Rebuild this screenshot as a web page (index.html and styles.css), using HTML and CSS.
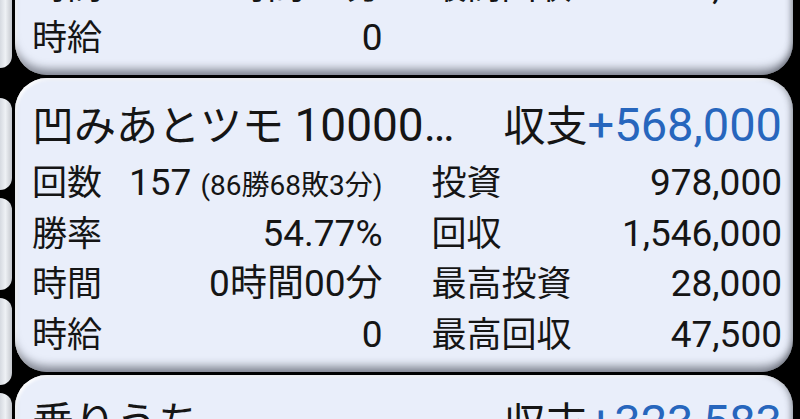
FILE: index.html
```html
<!DOCTYPE html>
<html lang="ja">
<head>
<meta charset="utf-8">
<link rel="stylesheet" href="styles.css">
</head>
<body>
<div class="screen">
  <div class="side">
    <div class="pill p1"></div>
    <div class="pill p2"></div>
    <div class="pill p3"></div>
    <div class="pill p4"></div>
    <div class="pill p5"></div>
  </div>
  <div class="list">
    <div class="card first">
      <div class="title"><span class="name">ジャグラー</span><span class="bal"><span class="bal-label">収支</span><span class="plus">+50,000</span></span></div>
      <div class="row"><div class="cell"><span>回数</span><span class="v">10</span></div><div class="cell"><span>投資</span><span class="v">10,000</span></div></div>
      <div class="row"><div class="cell"><span>勝率</span><span class="v">50.00%</span></div><div class="cell"><span>回収</span><span class="v">60,000</span></div></div>
      <div class="row"><div class="cell"><span>時間</span><span class="v">0時間00分</span></div><div class="cell"><span>最高回収</span><span class="v">60,000</span></div></div>
      <div class="row"><div class="cell"><span>時給</span><span class="v">0</span></div><div class="cell"><span></span><span></span></div></div>
    </div>
    <div class="card">
      <div class="title"><span class="name">凹みあとツモ <span class="lat">10000…</span></span><span class="bal"><span class="bal-label">収支</span><span class="plus">+568,000</span></span></div>
      <div class="row"><div class="cell"><span>回数</span><span class="v">157 <small>(86勝68敗3分)</small></span></div><div class="cell"><span>投資</span><span class="v">978,000</span></div></div>
      <div class="row"><div class="cell"><span>勝率</span><span class="v">54.77%</span></div><div class="cell"><span>回収</span><span class="v">1,546,000</span></div></div>
      <div class="row"><div class="cell"><span>時間</span><span class="v">0時間00分</span></div><div class="cell"><span>最高投資</span><span class="v">28,000</span></div></div>
      <div class="row"><div class="cell"><span>時給</span><span class="v">0</span></div><div class="cell"><span>最高回収</span><span class="v">47,500</span></div></div>
    </div>
    <div class="card">
      <div class="title"><span class="name">乗りうち</span><span class="bal"><span class="bal-label">収支</span><span class="plus">+323,583</span></span></div>
      <div class="row"><div class="cell"><span>回数</span><span class="v">100</span></div><div class="cell"><span>投資</span><span class="v">500,000</span></div></div>
    </div>
  </div>
</div>
</body>
</html>
```
FILE: styles.css
```css
html, body {
  margin: 0;
  padding: 0;
  background: #000;
}
body {
  width: 800px;
  height: 419px;
  overflow: hidden;
  font-family: Roboto, "Noto Sans CJK JP", sans-serif;
  color: #151515;
}
.screen {
  display: flex;
  align-items: flex-start;
  height: 419px;
  overflow: hidden;
}
.side {
  width: 12px;
  flex: none;
  display: flex;
  flex-direction: column;
  gap: 8px;
  margin-top: -20px;
  margin-right: 3px;
}
.pill {
  height: 92px;
  border-radius: 0 40px 40px 0;
  background: linear-gradient(90deg, #d6dae1 0%, #eef1f5 45%, #c4c7cd 100%);
}
.p1 { height: 88px; margin-bottom: 22px; }
.p4 { height: 87px; }
.list {
  width: 778px;
  flex: none;
  display: flex;
  flex-direction: column;
  gap: 3px;
}
.card {
  height: 294px;
  box-sizing: border-box;
  background: #e9eefa;
  border-radius: 32px;
  padding: 20px 11px 12px 17px;
  box-shadow:
    inset 0 -10px 8px -4px rgba(40, 44, 56, 0.5),
    inset -5px 0 6px -3px rgba(40, 44, 56, 0.4),
    inset 2px 2px 3px rgba(255, 255, 255, 0.9);
  flex: none;
}
.card.first {
  margin-top: -219px;
}
.title {
  display: flex;
  justify-content: space-between;
  align-items: center;
  height: 56px;
  line-height: 56px;
  font-size: 42px;
  margin-bottom: 4px;
  white-space: nowrap;
}
.name {
  overflow: hidden;
}
.lat {
  font-size: 46px;
}
.plus {
  color: #2766bd;
  font-size: 47px;
}
.row {
  display: grid;
  grid-template-columns: 1fr 1fr;
  column-gap: 49px;
  height: 50.5px;
  line-height: 50.5px;
  font-size: 35px;
}
.cell {
  display: flex;
  justify-content: space-between;
  align-items: baseline;
  white-space: nowrap;
}
.v {
  font-size: 37px;
}
.v small {
  font-size: 28px;
}
```
